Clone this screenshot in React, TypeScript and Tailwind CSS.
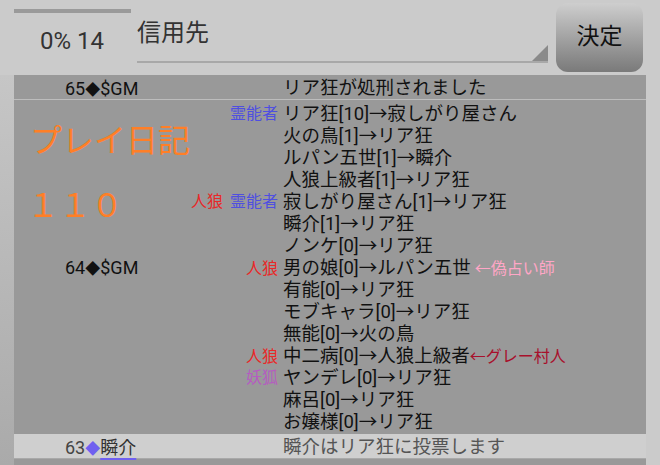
import React from "react";

type Seg = [string, string];
type Line = { name?: string; roles?: Seg[]; msg: string; note?: Seg };

const lines: Line[] = [
  { roles: [["霊能者", "text-[#4f4fe0]"]], msg: "リア狂[10]→寂しがり屋さん" },
  { msg: "火の鳥[1]→リア狂" },
  { msg: "ルパン五世[1]→瞬介" },
  { msg: "人狼上級者[1]→リア狂" },
  {
    roles: [
      ["人狼", "text-[#e82828]"],
      ["霊能者", "text-[#4f4fe0]"],
    ],
    msg: "寂しがり屋さん[1]→リア狂",
  },
  { msg: "瞬介[1]→リア狂" },
  { msg: "ノンケ[0]→リア狂" },
  {
    name: "64",
    roles: [["人狼", "text-[#e82828]"]],
    msg: "男の娘[0]→ルパン五世",
    note: ["←偽占い師", "text-[#ffa6c6] ml-[4px]"],
  },
  { msg: "有能[0]→リア狂" },
  { msg: "モブキャラ[0]→リア狂" },
  { msg: "無能[0]→火の鳥" },
  {
    roles: [["人狼", "text-[#e82828]"]],
    msg: "中二病[0]→人狼上級者",
    note: ["←グレー村人", "text-[#a8102c]"],
  },
  { roles: [["妖狐", "text-[#b55cc0]"]], msg: "ヤンデレ[0]→リア狂" },
  { msg: "麻呂[0]→リア狂" },
  { msg: "お嬢様[0]→リア狂" },
];

function Dia({ c = "" }: { c?: string }) {
  return <span className={`text-[15px] ${c}`}>◆</span>;
}

export default function App() {
  return (
    <div className="w-[660px] h-[465px] overflow-hidden bg-[#cbcbcb] font-['Roboto','Noto_Sans_CJK_JP',sans-serif]">
      {/* header */}
      <div className="flex h-[75px] pl-[14px]">
        <div className="w-[117px] flex flex-col">
          <div className="mt-[9px] h-[4px] bg-[#9a9a9a]" />
          <div className="mt-[14px] pl-[26px] text-[24px] leading-[28px] text-[#333]">0% 14</div>
        </div>
        <div className="ml-[6px] w-[411px] h-[63px] relative border-b-[2px] border-[#a8a8a8]">
          <div className="pt-[18px] text-[24px] leading-[30px] text-[#333]">信用先</div>
          <div className="absolute right-0 bottom-0 w-0 h-0 border-l-[16px] border-l-transparent border-b-[16px] border-b-[#8a8a8a]" />
        </div>
        <div className="ml-[8px] mt-[3px] w-[87px] h-[69px] rounded-[12px] bg-gradient-to-b from-[#cecece] to-[#7a7a7a] flex items-center justify-center text-[23px] text-[#111]">
          決定
        </div>
      </div>

      {/* list */}
      <div className="flex">
        <div className="w-[14px] h-[390px] bg-gradient-to-b from-[#c6c6c6] to-[#aaaaaa]" />
        <div className="w-[632px] bg-[#999999] text-[18.5px] text-[#111]">
          <div className="grid grid-cols-[269px_1fr] h-[25px] items-center border-b border-[#bdbdbd]">
            <div className="pl-[51px] text-[18px]">
              65<Dia />$GM
            </div>
            <div>リア狂が処刑されました</div>
          </div>
          <div className="relative pt-[3px] pb-[1px]">
            <div className="absolute left-[16px] top-[21px] text-[32px] leading-[40px] text-[#ff7f27]">プレイ日記</div>
            <div className="absolute left-[13px] top-[83px] text-[32px] leading-[40px] text-[#ff7f27] font-['Noto_Sans_CJK_JP',sans-serif]">１１０</div>
            {lines.map((l, i) => (
              <div key={i} className="grid grid-cols-[269px_1fr] leading-[22px] h-[22px] relative">
                <div className="flex items-center">
                  <div className="pl-[51px] flex-1 whitespace-nowrap text-[18px]">
                    {l.name ? (
                      <>
                        {l.name}
                        <Dia />$GM
                      </>
                    ) : (
                      ""
                    )}
                  </div>
                  <div className="pr-[5px] flex gap-[7px] text-[16px]">
                    {(l.roles ?? []).map((r, j) => (
                      <span key={j} className={r[1]}>
                        {r[0]}
                      </span>
                    ))}
                  </div>
                </div>
                <div className="whitespace-nowrap">
                  {l.msg}
                  {l.note && <span className={`text-[16px] ${l.note[1]}`}>{l.note[0]}</span>}
                </div>
              </div>
            ))}
          </div>
          <div className="grid grid-cols-[269px_1fr] h-[25px] items-center bg-[#cfcfcf] border-b border-[#a9a9a9]">
            <div className="pl-[51px] text-[18px] text-[#444]">
              63<Dia c="text-[#7060f0]" />
              <span className="text-[#333] underline decoration-[#7060f0] decoration-2 underline-offset-[4px]">瞬介</span>
            </div>
            <div className="text-[#555]">瞬介はリア狂に投票します</div>
          </div>
        </div>
        <div className="flex-1" />
      </div>
    </div>
  );
}
